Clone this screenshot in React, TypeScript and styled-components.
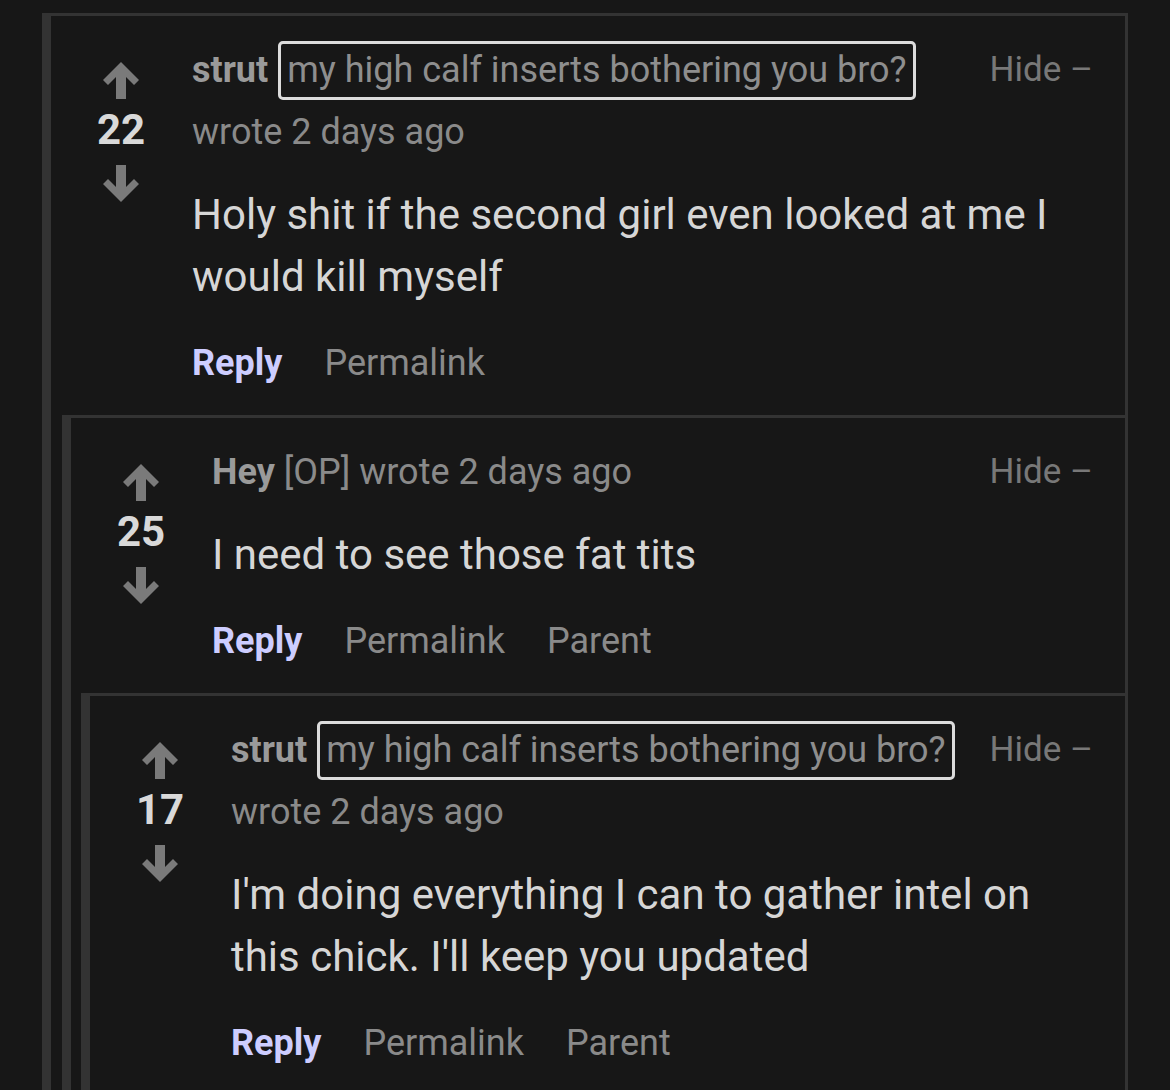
import React from "react";
import styled, { createGlobalStyle } from "styled-components";

const GlobalStyle = createGlobalStyle`
  html, body {
    margin: 0;
    padding: 0;
    background: #171717;
    overflow: hidden;
  }
  body {
    font-family: Roboto, "Liberation Sans", Arial, sans-serif;
  }
`;

const Page = styled.div`
  padding: 13px 42px 0;
  height: 1090px;
  box-sizing: border-box;
`;

const Box = styled.div<{ $depth: number }>`
  border-left: 9px solid #333333;
  border-top: 3px solid #333333;
  border-right: ${(p) => (p.$depth === 0 ? "3px solid #333333" : "none")};
  margin-left: ${(p) => (p.$depth === 0 ? 0 : p.$depth === 1 ? 11 : 10)}px;
`;

const Row = styled.div`
  display: flex;
  align-items: flex-start;
  padding-bottom: 21px;
`;

const VoteColumn = styled.div`
  width: 140px;
  flex: none;
  display: flex;
  flex-direction: column;
  align-items: center;
  padding-top: 46px;
`;

const Score = styled.div`
  font-size: 42px;
  line-height: 42px;
  font-weight: 700;
  color: #d9d9d9;
  margin: 10px 0 14px;
`;

const Content = styled.div`
  flex: 1;
  min-width: 0;
  padding: 23px 32px 0 1px;
`;

const Header = styled.div`
  display: flex;
  align-items: flex-start;
  gap: 24px;
  font-size: 36px;
  line-height: 62px;
  color: #8a8a8a;
`;

const Byline = styled.div`
  flex: 1;
  min-width: 0;
`;

const Author = styled.span`
  font-weight: 700;
  color: #9a9a9a;
`;

const Flair = styled.span`
  display: inline-block;
  border: 3px solid #dcdcdc;
  border-radius: 5px;
  padding: 0 6px;
  line-height: 53px;
  color: #8e8e8e;
  margin-left: 1px;
`;

const Hide = styled.span`
  flex: none;
  font-size: 35px;
  color: #787878;
`;

const Body = styled.div`
  margin-top: 21px;
  font-size: 42px;
  line-height: 62px;
  color: #d6d6d6;
`;

const Actions = styled.div`
  margin-top: 24px;
  display: flex;
  gap: 42px;
  font-size: 36px;
  line-height: 62px;
`;

const Action = styled.span<{ $primary?: boolean }>`
  color: ${(p) => (p.$primary ? "#cdcdff" : "#8a8a8a")};
  font-weight: ${(p) => (p.$primary ? 700 : 400)};
`;

const Arrow = ({ down }: { down?: boolean }) => (
  <svg
    width="36"
    height="37"
    viewBox="0 0 36 37"
    style={{ transform: down ? "rotate(180deg)" : undefined, display: "block" }}
  >
    <polygon
      points="18,0 36,18 31,23 23,15 23,37 13,37 13,15 5,23 0,18"
      fill="#7a7a7a"
    />
  </svg>
);

interface CommentData {
  author: string;
  flair?: string;
  op?: boolean;
  score: number;
  text: string;
  parent?: boolean;
  children?: CommentData[];
}

const Comment = ({ c, depth }: { c: CommentData; depth: number }) => (
  <Box $depth={depth}>
    <Row>
      <VoteColumn>
        <Arrow />
        <Score>{c.score}</Score>
        <Arrow down />
      </VoteColumn>
      <Content>
        <Header>
          <Byline>
            <Author>{c.author}</Author>{" "}
            {c.flair && <Flair>{c.flair}</Flair>}
            {c.op && " [OP]"} wrote 2 days ago
          </Byline>
          <Hide>Hide –</Hide>
        </Header>
        <Body>{c.text}</Body>
        <Actions>
          <Action $primary>Reply</Action>
          <Action>Permalink</Action>
          {c.parent && <Action>Parent</Action>}
        </Actions>
      </Content>
    </Row>
    {c.children?.map((child, i) => (
      <Comment key={i} c={child} depth={depth + 1} />
    ))}
  </Box>
);

const thread: CommentData = {
  author: "strut",
  flair: "my high calf inserts bothering you bro?",
  score: 22,
  text: "Holy shit if the second girl even looked at me I would kill myself",
  children: [
    {
      author: "Hey",
      op: true,
      score: 25,
      text: "I need to see those fat tits",
      parent: true,
      children: [
        {
          author: "strut",
          flair: "my high calf inserts bothering you bro?",
          score: 17,
          text: "I'm doing everything I can to gather intel on this chick. I'll keep you updated",
          parent: true,
        },
      ],
    },
  ],
};

export default function App() {
  return (
    <>
      <GlobalStyle />
      <Page>
        <Comment c={thread} depth={0} />
      </Page>
    </>
  );
}
